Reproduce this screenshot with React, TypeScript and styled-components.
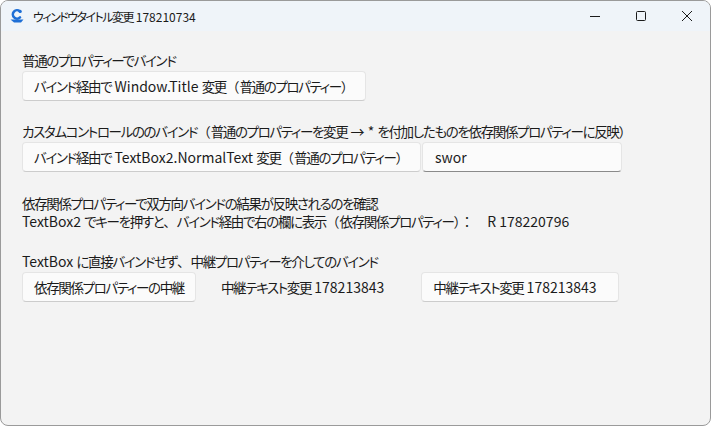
import React from "react";
import styled, { createGlobalStyle } from "styled-components";

const Global = createGlobalStyle`
  html, body { margin: 0; padding: 0; background: #ffffff; }
  body { font-family: "Noto Sans CJK JP", "Noto Sans", sans-serif; }
  * { box-sizing: border-box; }
`;

const Window = styled.div`
  width: 711px;
  height: 426px;
  border: 1px solid #9a9a9a;
  border-radius: 8px;
  background: #f3f3f3;
  overflow: hidden;
  display: flex;
  flex-direction: column;
  font-feature-settings: "palt";
  color: #1b1b1b;
`;

const TitleBar = styled.div`
  height: 30px;
  flex: none;
  background: #eff4f9;
  display: flex;
  align-items: center;
`;

const AppIcon = styled.svg`
  margin-left: 8px;
  width: 16px;
  height: 16px;
  flex: none;
`;

const TitleText = styled.div`
  margin-left: 8px;
  font-size: 12px;
  letter-spacing: -1.5px;
  flex: 1;
  color: #1a1a1a;
  white-space: nowrap;
`;

/* Latin runs: Segoe-like width, no tightening */
const L = styled.span<{ $size?: number }>`
  letter-spacing: 0;
  font-size: ${(p) => p.$size ?? 14}px;
`;

/* full-width punctuation */
const W = styled.span`
  letter-spacing: 0;
  font-feature-settings: normal;
`;

const Controls = styled.div`
  display: flex;
  height: 100%;
`;

const CtrlButton = styled.div`
  width: 46px;
  height: 100%;
  display: flex;
  align-items: center;
  justify-content: center;
`;

const Content = styled.div`
  padding: 20px 0 0 21px;
  display: flex;
  flex-direction: column;
  font-size: 13.5px;
  letter-spacing: -1.35px;
  line-height: 18px;
`;

const Section = styled.div<{ $top?: number }>`
  display: flex;
  flex-direction: column;
  margin-top: ${(p) => p.$top ?? 0}px;
`;

const Label = styled.div`
  height: 18px;
  white-space: nowrap;
`;

const Row = styled.div`
  display: flex;
  align-items: center;
  margin-top: 2px;
`;

const Button = styled.div<{ $ml?: number; $w?: number }>`
  height: 30px;
  line-height: 28px;
  padding: 0 11px;
  background: #fbfbfb;
  border: 1px solid #e5e5e5;
  border-bottom-color: #cccccc;
  border-radius: 4px;
  white-space: nowrap;
  margin-left: ${(p) => p.$ml ?? 0}px;
  ${(p) => (p.$w ? `width: ${p.$w}px;` : "")}
`;

const TextBox = styled.div`
  width: 200px;
  height: 30px;
  line-height: 28px;
  margin-left: 1px;
  padding: 0 12px;
  background: #fbfbfb;
  border: 1px solid #e5e5e5;
  border-bottom: 1px solid #8a8a8a;
  border-radius: 4px;
`;

const Inline = styled.div<{ $ml: number }>`
  margin-left: ${(p) => p.$ml}px;
  white-space: nowrap;
`;

export default function App() {
  return (
    <>
      <Global />
      <Window>
        <TitleBar>
          <AppIcon viewBox="0 0 16 16">
            <path
              d="M10.8 3.2 A4.2 4.2 0 1 0 11 9.4"
              fill="none"
              stroke="#1e6fd6"
              strokeWidth="2.6"
              strokeLinecap="round"
            />
            <circle cx="11.2" cy="3.4" r="1.6" fill="#1e6fd6" />
            <path d="M1.5 11.5 L5 14.5 L12 14.5 L14.5 11.5 Z" fill="#1e6fd6" />
          </AppIcon>
          <TitleText>
            ウィンドウタイトル変更<L $size={12}> 178210734</L>
          </TitleText>
          <Controls>
            <CtrlButton>
              <svg width="10" height="10" viewBox="0 0 10 10">
                <path d="M0 5.5 H10" stroke="#1b1b1b" strokeWidth="1" />
              </svg>
            </CtrlButton>
            <CtrlButton>
              <svg width="10" height="10" viewBox="0 0 10 10">
                <rect x="0.5" y="0.5" width="9" height="9" rx="1" fill="none" stroke="#1b1b1b" strokeWidth="1" />
              </svg>
            </CtrlButton>
            <CtrlButton>
              <svg width="10" height="10" viewBox="0 0 10 10">
                <path d="M0 0 L10 10 M10 0 L0 10" stroke="#1b1b1b" strokeWidth="1" />
              </svg>
            </CtrlButton>
          </Controls>
        </TitleBar>
        <Content>
          <Section>
            <Label>普通のプロパティーでバインド</Label>
            <Row>
              <Button>
                バインド経由で<L> Window.Title </L>変更<W>（</W>普通のプロパティー<W>）</W>
              </Button>
            </Row>
          </Section>
          <Section $top={21}>
            <Label>
              カスタムコントロールののバインド<W>（</W>普通のプロパティーを変更<L> → * </L>を付加したものを依存関係プロパティーに反映<W>）</W>
            </Label>
            <Row>
              <Button>
                バインド経由で<L> TextBox2.NormalText </L>変更<W>（</W>普通のプロパティー<W>）</W>
              </Button>
              <TextBox>
                <L>swor</L>
              </TextBox>
            </Row>
          </Section>
          <Section $top={22}>
            <Label>依存関係プロパティーで双方向バインドの結果が反映されるのを確認</Label>
            <Label>
              <L>TextBox2 </L>でキーを押すと<W>、</W>バインド経由で右の欄に表示<W>（</W>依存関係プロパティー<W>）：　</W>
              <L>R 178220796</L>
            </Label>
          </Section>
          <Section $top={22}>
            <Label>
              <L>TextBox </L>に直接バインドせず<W>、</W>中継プロパティーを介してのバインド
            </Label>
            <Row>
              <Button>依存関係プロパティーの中継</Button>
              <Inline $ml={25}>
                中継テキスト変更<L> 178213843</L>
              </Inline>
              <Button $ml={37} $w={198}>
                中継テキスト変更<L> 178213843</L>
              </Button>
            </Row>
          </Section>
        </Content>
      </Window>
    </>
  );
}
